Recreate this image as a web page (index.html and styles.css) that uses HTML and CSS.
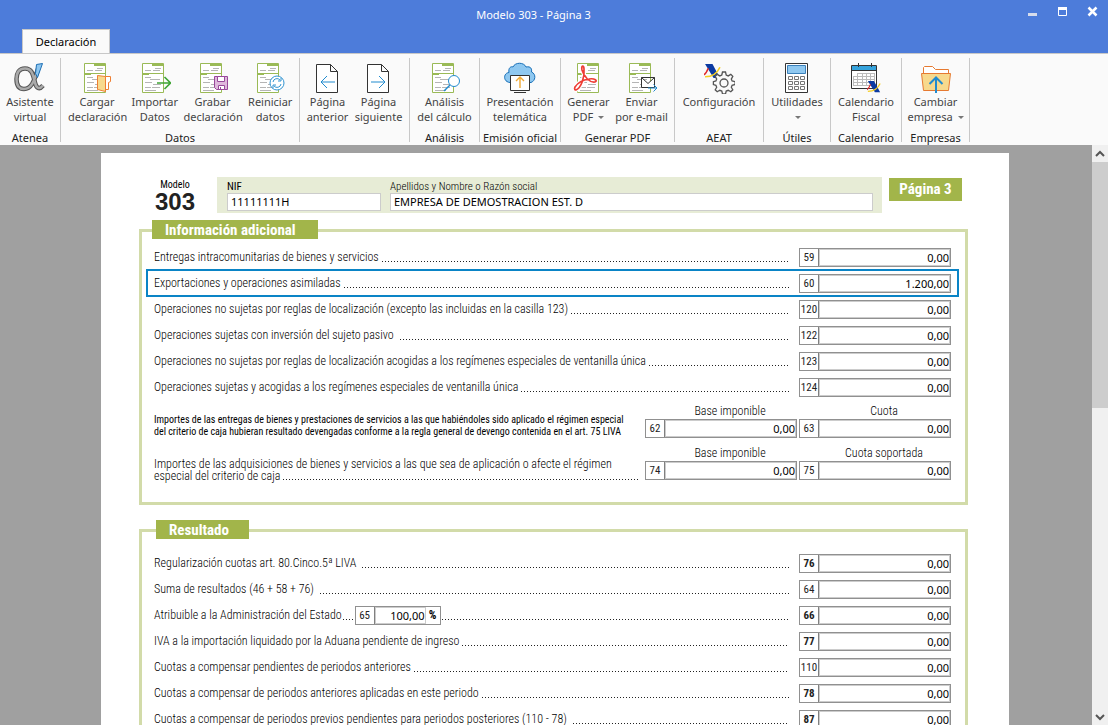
FILE: index.html
```html
<!DOCTYPE html>
<html lang="es">
<head>
<meta charset="utf-8">
<title>Modelo 303 - Página 3</title>
<link rel="stylesheet" href="styles.css">
</head>
<body>
<svg class="defs" aria-hidden="true">
  <symbol id="sheet" viewBox="0 0 32 32">
    <path d="M3.500 1.500h21v29h-21z" fill="#fff" stroke="#9aba56"/>
    <path d="M3 11.500h22M13 2.500h11M13 3.500h11M4 12.500h6" stroke="#9aba56"/>
    <path d="M6 8.500h6M14 8.500h7M16 6.500h6M6 15.500h6M11 17.500h10M6 20.500h7M14 22.500h8M6 25.500h6M13 25.500h8M6 28.500h11" stroke="#b5b5b5"/>
  </symbol>
  <symbol id="aeat" viewBox="0 0 16 16">
    <path d="M1 1h7l7 13H9z" fill="#0b3aa2"/>
    <path d="M0 11q2-1 4-6" fill="none" stroke="#e02b2b" stroke-width="1.500"/>
    <path d="M1 13Q11 13 15 4" fill="none" stroke="#f6cf23" stroke-width="1.500"/>
  </symbol>
</svg>
<div class="window">
  <header class="titlebar">
    <h1 class="title">Modelo 303 - Página 3</h1>
    <div class="controls">
      <button class="control" aria-label="Minimizar"><svg width="12" height="12"><path d="M1 8.500h9" stroke="#d6dcec" stroke-width="3"/></svg></button>
      <button class="control" aria-label="Maximizar"><svg width="12" height="12"><path d="M1.500 1.500h8v8h-8z" fill="none" stroke="#fff"/><path d="M1 2.500h9" stroke="#fff" stroke-width="3"/></svg></button>
      <button class="control" aria-label="Cerrar"><svg width="12" height="12"><path d="M1.500 1.500l8 8M9.500 1.500l-8 8" stroke="#fff" stroke-width="2.500"/></svg></button>
    </div>
    <button class="tab">Declaración</button>
  </header>

  <nav class="ribbon">
    <section class="group g-atenea">
      <div class="tools"><button class="tool"><svg class="icon" viewBox="0 0 32 32"><path d="M24 7C20 20 17 27 10 27 4 27 2.500 22 2.500 17 2.500 11 5 6.500 11 6.500c7 0 8 6 10 14 1 5 4 8 8 3" fill="none" stroke="#555" stroke-width="4.500"/><path d="M24 7C20 20 17 27 10 27 4 27 2.500 22 2.500 17 2.500 11 5 6.500 11 6.500c7 0 8 6 10 14 1 5 4 8 8 3" fill="none" stroke="#aaa" stroke-width="2.500"/><path d="M22.500 2.500l6-1-5 14-2-4z" fill="#8dc6f0" stroke="#1d6fb4"/></svg>Asistente<br>virtual</button></div>
      <h2 class="caption">Atenea</h2>
    </section>
    <section class="group g-datos">
      <div class="tools">
        <button class="tool"><svg class="icon" viewBox="0 0 32 32"><use href="#sheet"/><path d="M24 14.500h5.500v5l-2 1v7H24" fill="#fff" stroke="#ee7f33"/><path d="M16.500 13.500l8 1v15l-8-2z" fill="#f7d98d" stroke="#ee7f33"/></svg>Cargar<br>declaración</button>
        <button class="tool"><svg class="icon" viewBox="0 0 32 32"><use href="#sheet"/><path d="M18 21h13M25.500 15l6 6-6 6" fill="none" stroke="#3fa535" stroke-width="1.600"/></svg>Importar<br>Datos</button>
        <button class="tool"><svg class="icon" viewBox="0 0 32 32"><use href="#sheet"/><path d="M17.500 14.500h13v13h-11l-2-2z" fill="#dfb8dc" stroke="#98489a"/><path d="M20.500 14.500h7v5h-7zM21.500 23.500h6v4h-6zM23.500 25v2" fill="#fff" stroke="#98489a"/></svg>Grabar<br>declaración</button>
        <button class="tool"><svg class="icon" viewBox="0 0 32 32"><use href="#sheet"/><circle cx="23" cy="21" r="7" fill="#fff" stroke="#3294d1"/><path d="M19 20a4 4 0 0 1 7-2m1-2v3h-3M27 22a4 4 0 0 1-7 2m-1 2v-3h3" fill="none" stroke="#3294d1"/></svg>Reiniciar<br>datos</button>
      </div>
      <h2 class="caption">Datos</h2>
    </section>
    <section class="group g-pagina">
      <div class="tools">
        <button class="tool"><svg class="icon" viewBox="0 0 32 32"><path d="M4.500 2.500h14l7 7v21h-21zM18.500 2.500v7h7" fill="#fff" stroke="#333"/><path d="M23 20H9M15 14l-6 6 6 6" fill="none" stroke="#218bcf"/></svg>Página<br>anterior</button>
        <button class="tool"><svg class="icon" viewBox="0 0 32 32"><path d="M4.500 2.500h14l7 7v21h-21zM18.500 2.500v7h7" fill="#fff" stroke="#333"/><path d="M8 20h14M16 14l6 6-6 6" fill="none" stroke="#218bcf"/></svg>Página<br>siguiente</button>
      </div>
    </section>
    <section class="group g-analisis">
      <div class="tools"><button class="tool"><svg class="icon" viewBox="0 0 32 32"><use href="#sheet"/><circle cx="25" cy="19" r="5.500" fill="#fff" stroke="#218bcf"/><path d="M21 23l-6 6" stroke="#218bcf" stroke-width="1.500"/></svg>Análisis<br>del cálculo</button></div>
      <h2 class="caption">Análisis</h2>
    </section>
    <section class="group g-emision">
      <div class="tools"><button class="tool"><svg class="icon" viewBox="0 0 32 32"><path d="M6 20.500C-1 20-1 11 5 10.500 4 6 7 4 9 5c2-5 11-5 13 0 5-1 6 2 5.500 5 5 2 4 9-.500 10.500z" fill="#8fc8f0" stroke="#176fb7"/><path d="M6.500 13.500h19v15h-19z" fill="#fff" stroke="#333"/><path d="M10 30.500h12" stroke="#333"/><path d="M16 26V15M12 19l4-4 4 4" fill="none" stroke="#f1aa35" stroke-width="1.400"/></svg>Presentación<br>telemática</button></div>
      <h2 class="caption">Emisión oficial</h2>
    </section>
    <section class="group g-pdf">
      <div class="tools">
        <button class="tool"><svg class="icon" viewBox="0 0 32 32"><use href="#sheet" x="1"/><path d="M3 28c5-2 9-13 8-21 0-4-3-4-2 1 2 7 8 13 13 12 3-1 0-4-6-3-7 1-12 5-14 8-1 2 0 3 1 3z" fill="none" stroke="#fff" stroke-width="4"/><path d="M3 28c5-2 9-13 8-21 0-4-3-4-2 1 2 7 8 13 13 12 3-1 0-4-6-3-7 1-12 5-14 8-1 2 0 3 1 3z" fill="none" stroke="#ee3d35" stroke-width="1.700"/></svg>Generar<br>PDF <i class="arrow"></i></button>
        <button class="tool"><svg class="icon" viewBox="0 0 32 32"><use href="#sheet"/><path d="M15.500 15.500h13v10h-13zl6.500 6 6.500-6" fill="#fff" stroke="#333"/><path d="M22 26h9M27.500 22.500l3.500 3.500-3.500 3.500" fill="none" stroke="#218bcf"/></svg>Enviar<br>por e-mail</button>
      </div>
      <h2 class="caption">Generar PDF</h2>
    </section>
    <section class="group g-aeat">
      <div class="tools"><button class="tool"><svg class="icon" viewBox="0 0 32 32"><use href="#aeat" x="1" y="1" width="17" height="17"/><path d="M19.500 11.500h3l.700 3 2 .900 2.600-1.500 2 2-1.500 2.700.800 1.900 3 .700v2.800l-3 .800-.800 1.900 1.500 2.600-2 2-2.600-1.500-2 .800-.700 2.900h-3l-.700-2.900-2-.800-2.600 1.500-2-2 1.500-2.600-.800-1.900-2.500-.800v-2.800l2.500-.700.800-1.900-1.500-2.700 2-2 2.600 1.500 2-.900z" transform="translate(0 -1.500)" fill="#fafafa" stroke="#555" stroke-width="1.300"/><circle cx="21" cy="21" r="4" fill="none" stroke="#555" stroke-width="1.300"/></svg>Configuración</button></div>
      <h2 class="caption">AEAT</h2>
    </section>
    <section class="group g-utiles">
      <div class="tools"><button class="tool"><svg class="icon" viewBox="0 0 32 32"><path d="M4.500 1.500h22v29h-22z" fill="#fff" stroke="#333"/><path d="M6.500 3.500h18v8h-18z" fill="#8fc8f0" stroke="#3a80ba"/><path d="M7.500 14.500h4v3h-4zM13.500 14.500h4v3h-4zM19.500 14.500h4v3h-4zM7.500 19.500h4v3h-4zM13.500 19.500h4v3h-4zM19.500 19.500h4v3h-4zM7.500 24.500h4v3h-4zM13.500 24.500h4v3h-4zM19.500 24.500h4v3h-4z" fill="none" stroke="#777"/></svg>Utilidades<br><i class="arrow"></i></button></div>
      <h2 class="caption">Útiles</h2>
    </section>
    <section class="group g-calendario">
      <div class="tools"><button class="tool"><svg class="icon" viewBox="0 0 32 32"><path d="M1.500 3.500h25v23h-25z" fill="#fff" stroke="#333"/><path d="M2 4h24v4H2z" fill="#35a3dc"/><path d="M1 8.500h26M8.500 1v4M21.500 1v4" stroke="#333"/><path d="M7.500 11.500h17M3.500 14.500h21M3.500 17.500h21M3.500 20.500h21M3.500 23.500h17M3.500 14v10M7.500 11v13M12.500 11v13M16.500 11v13M20.500 11v13M24.500 11v9" stroke="#bbb"/><use href="#aeat" x="17" y="18" width="14" height="14"/></svg>Calendario<br>Fiscal</button></div>
      <h2 class="caption">Calendario</h2>
    </section>
    <section class="group g-empresas">
      <div class="tools"><button class="tool"><svg class="icon" viewBox="0 0 32 32"><path d="M3.500 12V5.500l1-1h8l3 3h13V12" fill="#fff" stroke="#e67a31"/><path d="M1.500 11.500h29l-2 17h-25z" fill="#f7d98d" stroke="#e67a31"/><path d="M16 31V16M9.500 22l6.500-6.500 6.500 6.500" fill="none" stroke="#218bcf" stroke-width="2"/></svg>Cambiar<br>empresa <i class="arrow"></i></button></div>
      <h2 class="caption">Empresas</h2>
    </section>
  </nav>

  <div class="workspace">
    <main class="page">
      <header class="head">
        <div class="model"><span class="model-word">Modelo</span><strong class="model-number">303</strong></div>
        <div class="identity">
          <label class="id-field nif"><b>NIF</b><input class="id-input" value="11111111H"></label>
          <label class="id-field name">Apellidos y Nombre o Razón social<input class="id-input" value="EMPRESA DE DEMOSTRACION EST. D"></label>
        </div>
        <div class="page-tag">Página 3</div>
      </header>

      <section class="panel info">
        <h2 class="legend">Información adicional</h2>
        <div class="row"><label class="text" for="c59">Entregas intracomunitarias de bienes y servicios</label><span class="dots"></span><div class="box"><span class="num">59</span><input class="amount" id="c59" value="0,00"></div></div>
        <div class="row selected"><label class="text" for="c60">Exportaciones y operaciones asimiladas</label><span class="dots"></span><div class="box"><span class="num">60</span><input class="amount" id="c60" value="1.200,00"></div></div>
        <div class="row"><label class="text" for="c120">Operaciones no sujetas por reglas de localización (excepto las incluidas en la casilla 123)</label><span class="dots"></span><div class="box"><span class="num">120</span><input class="amount" id="c120" value="0,00"></div></div>
        <div class="row"><label class="text" for="c122">Operaciones sujetas con inversión del sujeto pasivo</label><span class="dots spaced"></span><div class="box"><span class="num">122</span><input class="amount" id="c122" value="0,00"></div></div>
        <div class="row"><label class="text" for="c123">Operaciones no sujetas por reglas de localización acogidas a los regímenes especiales de ventanilla única</label><span class="dots"></span><div class="box"><span class="num">123</span><input class="amount" id="c123" value="0,00"></div></div>
        <div class="row"><label class="text" for="c124">Operaciones sujetas y acogidas a los regímenes especiales de ventanilla única</label><span class="dots"></span><div class="box"><span class="num">124</span><input class="amount" id="c124" value="0,00"></div></div>
        <div class="double">
          <div class="note small">
            <div>Importes de las entregas de bienes y prestaciones de servicios a las que habiéndoles sido aplicado el régimen especial</div>
            <div>del criterio de caja hubieran resultado devengadas conforme a la regla general de devengo contenida en el art. 75 LIVA</div>
          </div>
          <div class="column"><label for="c62">Base imponible</label><div class="box"><span class="num">62</span><input class="amount" id="c62" value="0,00"></div></div>
          <div class="column"><label for="c63">Cuota</label><div class="box"><span class="num">63</span><input class="amount" id="c63" value="0,00"></div></div>
        </div>
        <div class="double">
          <div class="note">
            <div>Importes de las adquisiciones de bienes y servicios a las que sea de aplicación o afecte el régimen</div>
            <div class="leader">especial del criterio de caja<span class="dots"></span></div>
          </div>
          <div class="column"><label for="c74">Base imponible</label><div class="box"><span class="num">74</span><input class="amount" id="c74" value="0,00"></div></div>
          <div class="column"><label for="c75">Cuota soportada</label><div class="box"><span class="num">75</span><input class="amount" id="c75" value="0,00"></div></div>
        </div>
      </section>

      <section class="panel result">
        <h2 class="legend">Resultado</h2>
        <div class="row"><label class="text" for="c76">Regularización cuotas art. 80.Cinco.5ª LIVA</label><span class="dots spaced"></span><div class="box"><span class="num strong">76</span><input class="amount" id="c76" value="0,00"></div></div>
        <div class="row"><label class="text" for="c64">Suma de resultados (46 + 58 + 76)</label><span class="dots spaced"></span><div class="box"><span class="num">64</span><input class="amount" id="c64" value="0,00"></div></div>
        <div class="row"><label class="text" for="c66">Atribuible a la Administración del Estado</label><span class="dots short"></span><div class="box percent"><span class="num">65</span><input class="amount" aria-label="Porcentaje" value="100,00"><span class="sign">%</span></div><span class="dots joined"></span><div class="box"><span class="num strong">66</span><input class="amount" id="c66" value="0,00"></div></div>
        <div class="row"><label class="text" for="c77">IVA a la importación liquidado por la Aduana pendiente de ingreso</label><span class="dots"></span><div class="box"><span class="num strong">77</span><input class="amount" id="c77" value="0,00"></div></div>
        <div class="row"><label class="text" for="c110">Cuotas a compensar pendientes de periodos anteriores</label><span class="dots"></span><div class="box"><span class="num">110</span><input class="amount" id="c110" value="0,00"></div></div>
        <div class="row"><label class="text" for="c78">Cuotas a compensar de periodos anteriores aplicadas en este periodo</label><span class="dots"></span><div class="box"><span class="num strong">78</span><input class="amount" id="c78" value="0,00"></div></div>
        <div class="row"><label class="text" for="c87">Cuotas a compensar de periodos previos pendientes para periodos posteriores (110 - 78)</label><span class="dots spaced"></span><div class="box"><span class="num strong">87</span><input class="amount" id="c87" value="0,00"></div></div>
      </section>
    </main>
    <div class="scrollbar">
      <button class="scroll-button" aria-label="Subir"><svg width="10" height="8"><path d="M1 6l4-4 4 4" fill="none" stroke="#555" stroke-width="2"/></svg></button>
      <div class="track"><div class="thumb"></div></div>
      <button class="scroll-button" aria-label="Bajar"><svg width="10" height="8"><path d="M1 2l4 4 4-4" fill="none" stroke="#555" stroke-width="2"/></svg></button>
    </div>
  </div>
</div>
</body>
</html>
```
FILE: styles.css
```css
* { box-sizing: border-box; }
body { margin: 0; font: 11px/15px "Noto Sans", "Open Sans", sans-serif; color: #222; }
h1, h2 { margin: 0; font: inherit; }
button { border: 0; padding: 0; background: none; font: inherit; color: inherit; }
svg { display: block; }
.defs { position: absolute; width: 0; height: 0; }

.window { display: flex; flex-direction: column; height: 100vh; overflow: hidden; }

.titlebar {
  display: grid;
  flex: none;
  grid-template-columns: 1fr auto;
  grid-template-rows: 29px 24px;
  background: #4d7cda;
  border-bottom: 1px solid #c8c8c8;
}
.title { padding: 7px 0 0 40px; color: #fff; text-align: center; }
.controls { display: flex; gap: 18px; padding: 6px 9px 0 0; }
.control { width: 12px; height: 12px; }
.tab {
  justify-self: start;
  width: 88px;
  margin-left: 22px;
  background: #fafafa;
  border: 1px solid #c8c8c8;
  border-bottom: 0;
  color: #000;
}

.ribbon { display: flex; flex: none; height: 91px; padding: 4px 0 3px; background: #fafafa; }
.group {
  display: flex;
  flex: none;
  flex-direction: column;
  justify-content: space-between;
  border-right: 1px solid #c8c8c8;
}
.tools { display: flex; justify-content: center; padding-top: 4px; }
.tool { display: block; color: #444; text-align: center; white-space: nowrap; }
.icon { width: 32px; height: 32px; margin: 0 auto; }
.caption { height: 11px; line-height: 14px; text-align: center; white-space: nowrap; }
.arrow {
  display: inline-block;
  margin-left: 2px;
  border: 3px solid transparent;
  border-top-color: #777;
  border-bottom: 0;
  vertical-align: 2px;
}
.g-atenea { width: 61px; }
.g-datos { width: 239px; }
.g-datos .tools { padding-left: 7px; }
.g-datos .tool { width: 58px; }
.g-pagina { width: 110px; }
.g-pagina .tools { padding-right: 3px; }
.g-pagina .tool { width: 51px; }
.g-analisis { width: 70px; }
.g-emision { width: 81px; }
.g-pdf { width: 114px; }
.g-pdf .tools { padding-right: 5px; }
.g-pdf .tool { width: 53px; }
.g-aeat { width: 89px; }
.g-utiles { width: 67px; }
.g-calendario { width: 71px; }
.g-empresas { width: 68px; }

.workspace { display: flex; flex: 1; min-height: 0; background: #a0a0a0; }
.page {
  flex: 1;
  min-width: 0;
  margin: 8px 83px 0 101px;
  padding: 24px 41px 0 38px;
  overflow: hidden;
  background: #fff;
  color: #000;
  font: 300 12px/15px "Roboto Condensed", "Liberation Sans Narrow", "Liberation Sans", sans-serif;
}

.head { display: flex; height: 36px; }
.model { display: flex; flex-direction: column; width: 72px; margin-right: 6px; align-items: center; }
.model-word { font-size: 10px; font-weight: 400; line-height: 15px; }
.model-number { color: #222; font: bold 24px/20px "Liberation Sans", sans-serif; }
.identity { display: flex; flex: 1; gap: 9px; padding: 4px 9px 1px 10px; background: #e7ecd6; }
.id-field { display: flex; flex-direction: column; font-size: 11px; line-height: 12px; }
.nif { width: 154px; }
.name { flex: 1; }
.id-input {
  width: 100%;
  height: 18px;
  padding: 0 3px 1px;
  border: 1px solid #ccc;
  background: #fff;
  color: #000;
  font: 11px "Noto Sans", sans-serif;
}
.page-tag {
  align-self: flex-start;
  width: 73px;
  margin: 1px 6px 0 7px;
  background: #a2b54a;
  color: #fff;
  font-size: 15px;
  font-weight: bold;
  line-height: 23px;
  text-align: center;
}

.panel { border: 3px solid #d2dba9; }
.info { margin-top: 16px; padding: 0 7px 20px 5px; }
.result { margin-top: 24px; padding: 0 7px 20px 5px; }
.legend {
  width: 166px;
  height: 19px;
  margin: -12px 0 5px 5px;
  padding-left: 13px;
  background: #a2b54a;
  color: #fff;
  font-size: 15px;
  font-weight: bold;
  line-height: 20px;
}
.result .legend { width: 93px; margin: -12px 0 11px 9px; }

.row { display: flex; align-items: center; height: 26px; padding: 0 7px; }
.selected { outline: 2px solid #0a84c6; outline-offset: -1px; }
.text { white-space: nowrap; }
.dots {
  flex: 1;
  height: 1px;
  margin: 9px 10px 0 3px;
  background: repeating-linear-gradient(90deg, #222 0 1px, transparent 1px 3px);
}
.spaced { margin-left: 6px; }
.short { flex: 0 0 11px; margin: 9px 1px 0 1px; }
.joined { margin-left: 1px; }
.leader .dots { margin: 7px 0 0 3px; }

.box { display: flex; flex: none; width: 152px; height: 19px; border: 1px solid #909090; }
.num {
  flex: none;
  width: 19px;
  border-right: 1px solid #808080;
  color: #222;
  font-size: 11px;
  font-weight: 400;
  line-height: 18px;
  text-align: center;
}
.strong { font-weight: bold; }
.amount {
  flex: 1;
  min-width: 0;
  padding: 0;
  border: 1px solid #ccc;
  background: #fff;
  color: #000;
  font: 11px "Noto Sans", sans-serif;
  text-align: right;
}
.percent { width: 86px; }
.sign { width: 14px; font-weight: bold; line-height: 17px; text-align: center; }

.double {
  display: grid;
  grid-template-columns: minmax(0, 1fr) 152px 152px;
  column-gap: 2px;
  padding: 0 7px;
  margin-top: 4px;
}
.double + .double { margin-top: 8px; }
.note { padding: 12px 4px 0 0; line-height: 12px; white-space: nowrap; }
.small { padding-top: 10px; font-size: 10px; font-weight: 400; }
.leader { display: flex; align-items: center; }
.column { display: flex; flex-direction: column; }
.column label { padding-left: 18px; text-align: center; }

.scrollbar { display: flex; flex: none; flex-direction: column; width: 16px; background: #f0f0f0; }
.scroll-button { display: grid; place-items: center; height: 17px; }
.track { flex: 1; }
.thumb { height: 45%; background: #cdcdcd; }
```
